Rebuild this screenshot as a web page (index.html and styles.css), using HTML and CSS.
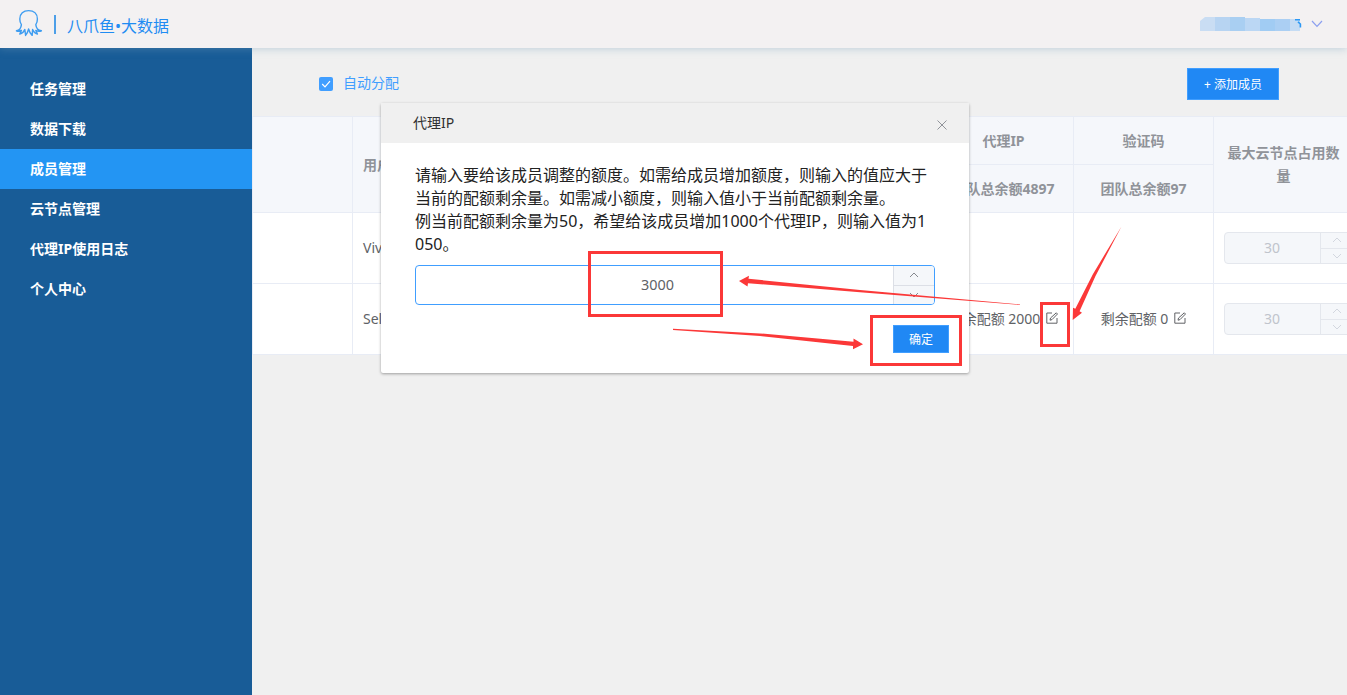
FILE: index.html
```html
<!DOCTYPE html>
<html lang="zh-CN">
  <head>
    <meta charset="UTF-8" />
    <meta name="viewport" content="width=device-width, initial-scale=1.0" />
    <title>成员管理</title>
    <link rel="stylesheet" href="styles.css">
  </head>
  <body>
    <header class="topbar">
      <div class="brand">
        <svg class="logo" width="28" height="28" viewBox="0 0 28 28">
          <path d="M6.4 15.6C5 13.8 4.8 11.8 4.8 10C4.8 4.8 8.4 1.6 13.6 1.6S22.4 4.8 22.4 10C22.4 11.8 22.2 13.8 20.8 15.6C21.2 19.4 23.2 21.4 26.4 21.8C24.8 22.6 22.6 22.4 20.8 21.4L22.4 25C19.8 24.2 18.4 22.4 17.6 20.4L17.2 26.4C15.4 24.6 14.2 22.4 13.6 20C13 22.4 12.2 24.6 10.6 26.4L9.8 20.4C9 22.4 7.4 24.2 4.8 25L6.4 21.4C4.6 22.4 3 22.6 1.4 21.8C4.2 21.4 6 19.4 6.4 15.6Z" />
        </svg>
        <span class="brand-line"></span>
        <span class="brand-name">八爪鱼•大数据</span>
      </div>
      <div class="account">
        <svg width="104" height="16" viewBox="0 0 104 16">
          <path d="M0 15V5L5 1H15V15Z" fill="#c9ddf3" />
          <rect x="15" y="1" width="15" height="14" fill="#b7d4f2" />
          <rect x="30" y="1" width="15" height="14" fill="#a9cff2" />
          <rect x="45" y="2" width="15" height="13" fill="#bbd7f4" />
          <rect x="60" y="3" width="15" height="12" fill="#a1ccf3" />
          <rect x="75" y="3" width="15" height="12" fill="#abcff3" />
          <rect x="90" y="3" width="10" height="12" fill="#c5dcf4" />
          <path d="M95 3.8H100M98 5.8L100.4 8V11.5" fill="none" stroke="#2b98f5" stroke-width="1.6" />
        </svg>
        <svg class="caret" width="12" height="8" viewBox="0 0 12 8">
          <path d="M1 1L6 6.3L11 1" />
        </svg>
      </div>
    </header>

    <div class="layout">
      <nav class="sidebar">
        <ul>
          <li><a>任务管理</a></li>
          <li><a>数据下载</a></li>
          <li><a class="active">成员管理</a></li>
          <li><a>云节点管理</a></li>
          <li><a>代理IP使用日志</a></li>
          <li><a>个人中心</a></li>
        </ul>
      </nav>

      <main>
        <div class="toolbar">
          <label class="auto">
            <span class="check">
              <svg width="14" height="14" viewBox="0 0 14 14"><path d="M3.2 7L6 9.8L11 4.2" /></svg>
            </span>
            <span class="auto-text">自动分配</span>
          </label>
          <button class="btn btn-add">+ 添加成员</button>
        </div>

        <table class="members">
          <colgroup>
            <col class="c-blank"><col class="c-user"><col class="c-wide"><col class="c-mid"><col class="c-mid"><col class="c-mid">
          </colgroup>
          <thead>
            <tr>
              <th rowspan="2"></th>
              <th rowspan="2" class="left">用户名</th>
              <th rowspan="2"></th>
              <th>代理IP</th>
              <th>验证码</th>
              <th rowspan="2" class="raised">最大云节点占用数量</th>
            </tr>
            <tr>
              <th class="nowrap">团队总余额4897</th>
              <th>团队总余额97</th>
            </tr>
          </thead>
          <tbody>
            <tr>
              <td></td>
              <td class="left raised">Viv</td>
              <td></td>
              <td></td>
              <td></td>
              <td>
                <div class="number disabled">
                  <span class="value">30</span>
                  <span class="steps">
                    <i><svg width="10" height="6" viewBox="0 0 10 6"><path d="M1 5L5 1L9 5" /></svg></i>
                    <i><svg width="10" height="6" viewBox="0 0 10 6"><path d="M1 1L5 5L9 1" /></svg></i>
                  </span>
                </div>
              </td>
            </tr>
            <tr>
              <td></td>
              <td class="left raised">Sel</td>
              <td></td>
              <td class="nowrap raised">
                <span class="quota">剩余配额 2000
                  <svg class="edit" width="12" height="12" viewBox="0 0 12 12"><path d="M6 1H.8V11.2H11V6M4 8.2L4.5 6L10.3.8L11.5 2L6 7.6Z" /></svg>
                </span>
              </td>
              <td class="nowrap raised">
                <span class="quota">剩余配额 0
                  <svg class="edit" width="12" height="12" viewBox="0 0 12 12"><path d="M6 1H.8V11.2H11V6M4 8.2L4.5 6L10.3.8L11.5 2L6 7.6Z" /></svg>
                </span>
              </td>
              <td>
                <div class="number disabled">
                  <span class="value">30</span>
                  <span class="steps">
                    <i><svg width="10" height="6" viewBox="0 0 10 6"><path d="M1 5L5 1L9 5" /></svg></i>
                    <i><svg width="10" height="6" viewBox="0 0 10 6"><path d="M1 1L5 5L9 1" /></svg></i>
                  </span>
                </div>
              </td>
            </tr>
          </tbody>
        </table>
      </main>
    </div>

    <!-- 代理IP 弹窗 -->
    <div class="dialog">
      <div class="dialog-head">
        <span class="dialog-title">代理IP</span>
        <svg class="close" width="10" height="10" viewBox="0 0 10 10"><path d="M.5.5L9.5 9.5M9.5.5L.5 9.5" /></svg>
      </div>
      <div class="dialog-body">
        <p>请输入要给该成员调整的额度。如需给成员增加额度，则输入的值应大于当前的配额剩余量。如需减小额度，则输入值小于当前配额剩余量。<br>例当前配额剩余量为50，希望给该成员增加1000个代理IP，则输入值为1050。</p>
        <div class="number large">
          <span class="value">3000</span>
          <span class="steps">
            <i><svg width="10" height="6" viewBox="0 0 10 6"><path d="M1 5L5 1L9 5" /></svg></i>
            <i><svg width="10" height="6" viewBox="0 0 10 6"><path d="M1 1L5 5L9 1" /></svg></i>
          </span>
        </div>
        <div class="dialog-foot">
          <button class="btn btn-ok">确定</button>
        </div>
      </div>
    </div>

    <!-- 操作步骤标注 -->
    <svg class="marks" width="1347" height="695" viewBox="0 0 1347 695">
      <g class="boxes">
        <rect x="589.5" y="252.5" width="132" height="63" />
        <rect x="871.5" y="316.5" width="89" height="48" />
        <rect x="1041.5" y="303.5" width="27" height="42" />
      </g>
      <g class="arrows">
        <path d="M739 281L749 275.7L748.5 278.8L860 290L1020 304.4V305L860 292.3L748 283.2L747.5 286.4Z" />
        <path d="M863 344.2L853.5 338.6L853.5 341.8L760 333.4L673 328.8V330L760 336L853 346L853 349.2Z" />
        <path d="M1072.7 320L1073 307.8L1075.3 308.8L1093 274L1121.5 226.5L1095.5 276L1079.6 311.2L1082 312.8Z" />
      </g>
    </svg>
  </body>
</html>
```
FILE: styles.css
```css
* {
  box-sizing: border-box;
}

html,
body {
  margin: 0;
  height: 100%;
  overflow: hidden;
}

body {
  display: flex;
  flex-direction: column;
  background-color: #f0f0f0;
  color: #606266;
  font-family: "Noto Sans", "Noto Sans CJK SC", sans-serif;
  font-size: 14px;
}

svg {
  display: block;
  fill: none;
}

/* 顶部 */
.topbar {
  position: relative;
  z-index: 1;
  flex: none;
  height: 48px;
  padding: 0 24px 0 15px;
  display: flex;
  align-items: center;
  justify-content: space-between;
  background-color: #f3f1f2;
  box-shadow: 0 1px 8px rgba(120, 160, 190, 0.4);
}

.brand {
  display: flex;
  align-items: center;
}

.logo {
  margin-top: -2px;
  stroke: #3f9df0;
  stroke-width: 1.4;
  stroke-linejoin: round;
}

.brand-line {
  width: 2px;
  height: 19px;
  margin: 0 11px 0 11px;
  background-color: #4d9fe8;
}

.brand-name {
  font-size: 16px;
  line-height: 24px;
  padding-top: 4px;
  color: #1f8cf3;
}

.account {
  display: flex;
  align-items: center;
  gap: 7px;
  padding-bottom: 1px;
}

.caret {
  stroke: #8b9ff0;
  stroke-width: 1.2;
}

/* 左侧菜单 */
.layout {
  flex: 1;
  display: flex;
  min-height: 0;
}

.sidebar {
  flex: none;
  width: 252px;
  padding-top: 21px;
  background-color: #185c97;
}

.sidebar ul {
  list-style: none;
  margin: 0;
  padding: 0;
}

.sidebar a {
  display: block;
  height: 40px;
  padding-left: 30px;
  line-height: 40px;
  color: #fff;
  font-weight: bold;
}

.sidebar a.active {
  background-color: #2395f3;
}

/* 内容区 */
main {
  flex: 1;
  min-width: 0;
  overflow: hidden;
}

.toolbar {
  height: 68px;
  padding: 4px 68px 0 67px;
  display: flex;
  align-items: center;
  justify-content: space-between;
}

.auto {
  display: flex;
  align-items: center;
  gap: 10px;
  line-height: 20px;
  color: #409eff;
}

.auto-text {
  padding-bottom: 2px;
}

.check {
  border-radius: 2px;
  background-color: #409eff;
}

.check path {
  stroke: #fff;
  stroke-width: 1.2;
}

.btn {
  padding: 0;
  border: 1px solid #409eff;
  background-color: #2088f4;
  color: #fff;
  font-family: inherit;
  font-size: 12px;
}

.btn-add {
  width: 92px;
  height: 32px;
}

.members {
  width: 1102px;
  table-layout: fixed;
  border-collapse: collapse;
  line-height: 23px;
}

.c-blank {
  width: 100px;
}

.c-user,
.c-mid {
  width: 140px;
}

.c-wide {
  width: 441px;
}

.members th,
.members td {
  padding: 0 10px;
  border: 1px solid #e8ecf5;
  text-align: center;
}

.members th {
  height: 48px;
  background-color: #f5f7fb;
  color: #909399;
  font-weight: bold;
}

.members td {
  height: 71px;
  background-color: #fff;
}

.members .left {
  text-align: left;
}

.members .nowrap {
  padding: 0;
  white-space: nowrap;
}

.members .raised {
  padding-bottom: 2px;
}

.quota {
  display: inline-flex;
  align-items: center;
  gap: 6px;
}

.edit {
  stroke: #606266;
  stroke-width: 1;
}

/* 数字输入框 */
.number {
  display: flex;
  width: 130px;
  height: 32px;
  border: 1px solid #dcdfe6;
  border-radius: 4px;
  overflow: hidden;
}

.number .value {
  flex: 1;
  align-self: center;
  padding: 0 1px 2px 0;
  text-align: center;
}

.steps {
  width: 33px;
  display: flex;
  flex-direction: column;
  border-left: 1px solid #dcdfe6;
  background-color: #f5f7fa;
}

.steps i {
  flex: 1;
  display: flex;
  align-items: center;
  justify-content: center;
}

.steps i + i {
  border-top: 1px solid #dcdfe6;
}

.steps path {
  stroke: #85888e;
}

.disabled {
  border-color: #e4e7ed;
  background-color: #f5f7fa;
  color: #c0c4cc;
}

.disabled .steps,
.disabled .steps i {
  border-color: #e4e7ed;
}

.disabled .steps path {
  stroke: #d3d7df;
}

.large {
  width: 520px;
  height: 40px;
  border-color: #409eff;
}

.large .value {
  padding-left: 7px;
  font-size: 14.4px;
}

.large .steps {
  width: 41px;
}

/* 弹窗 */
.dialog {
  position: absolute;
  z-index: 2;
  left: 381px;
  top: 103px;
  width: 588px;
  height: 270px;
  border-radius: 2px;
  background-color: #fff;
  box-shadow: 0 1px 3px rgba(0, 0, 0, 0.35);
}

.dialog-head {
  display: flex;
  align-items: center;
  justify-content: space-between;
  height: 40px;
  padding: 0 22px 0 32px;
  background-color: #f0f0f0;
  color: #303133;
}

.dialog-title {
  padding-bottom: 2px;
}

.close {
  margin-top: 4px;
  stroke: #909399;
}

.dialog-body {
  padding: 21px 20px 0 34px;
  color: #222;
}

.dialog-body p {
  width: 520px;
  margin: 0 0 9px;
  font-size: 16px;
  line-height: 23px;
  word-break: break-all;
}

.dialog-body .value {
  color: #606266;
}

.dialog-foot {
  display: flex;
  justify-content: flex-end;
  padding-top: 20px;
}

.btn-ok {
  width: 56px;
  height: 28px;
}

/* 标注层 */
.marks {
  position: absolute;
  z-index: 3;
  left: 0;
  top: 0;
  pointer-events: none;
}

.boxes rect {
  stroke: #fb3838;
  stroke-width: 3;
}

.arrows path {
  fill: #fb3838;
}
```
